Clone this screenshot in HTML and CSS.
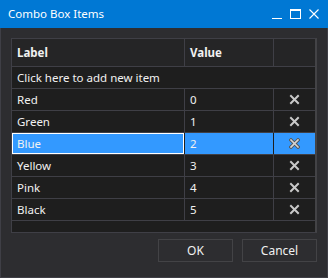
FILE: index.html
```html
<!DOCTYPE html>
<html lang="en">
<head>
  <meta charset="UTF-8" />
  <title>Combo Box Items</title>
  <link rel="stylesheet" href="styles.css">
</head>
<body>

  <div class="window">
    <!-- Title bar -->
    <div class="titlebar">
      <span class="title">Combo Box Items</span>
      <div class="controls">
        <svg width="10" height="10" viewBox="0 0 10 10"><path d="M0 9.5H10" stroke="#fff" stroke-width="1"/></svg>
        <svg width="11" height="10" viewBox="0 0 11 10"><rect x="0.5" y="0.5" width="10" height="9" fill="none" stroke="#fff" stroke-width="1"/><path d="M0 1.5H11" stroke="#fff" stroke-width="1"/></svg>
        <svg width="10" height="10" viewBox="0 0 10 10"><path d="M0.5 0.5L9.5 9.5M9.5 0.5L0.5 9.5" stroke="#fff" stroke-width="1.1"/></svg>
      </div>
    </div>

    <div class="content">
      <div class="grid">
        <div class="row header">
          <div class="cell label">Label</div>
          <div class="cell value">Value</div>
          <div class="cell del"></div>
        </div>
        <div class="row add-row">
          <div class="cell">Click here to add new item</div>
        </div>
        <div id="rows"></div>
        <div class="filler"></div>
      </div>

      <div class="buttons">
        <button>OK</button>
        <button>Cancel</button>
      </div>
    </div>
  </div>

<script>
  const items = ['Red', 'Green', 'Blue', 'Yellow', 'Pink', 'Black'];
  const selected = 2;
  const list = document.getElementById('rows');

  items.forEach((name, i) => {
    const row = document.createElement('div');
    row.className = 'row' + (i === selected ? ' selected' : '');
    row.innerHTML = `
      <div class="cell label">${name}</div>
      <div class="cell value">${i}</div>
      <div class="cell del">
        <svg width="11" height="11" viewBox="0 0 11 11">
          <path d="M2 2L9 9M9 2L2 9" stroke="${i === selected ? '#555' : '#c9c9c9'}" stroke-width="${i === selected ? 3.4 : 2}" stroke-linecap="square"/>
          ${i === selected ? '<path d="M2 2L9 9M9 2L2 9" stroke="#d6d6d6" stroke-width="1.6" stroke-linecap="square"/>' : ''}
        </svg>
      </div>
    `;
    list.appendChild(row);
  });
</script>

</body>
</html>
```

FILE: styles.css
```css
body {
  margin: 0;
  font-family: "Noto Sans", sans-serif;
  font-size: 11.5px;
  color: #f1f1f1;
  background: #2d2d30;
}

.window {
  width: 328px;
  height: 278px;
  box-sizing: border-box;
  background: #2d2d30;
  border: 1px solid #3f3f46;
  border-top: none;
  display: flex;
  flex-direction: column;
}

.titlebar {
  height: 28px;
  margin: 0 -1px;
  background: #0078d4;
  display: flex;
  align-items: center;
  justify-content: space-between;
  padding: 0 9px 0 8px;
  color: #fff;
}
.title {
  font-size: 11.5px;
  margin-top: -1px;
}
.controls {
  display: flex;
  gap: 8px;
  align-items: center;
}

.content {
  padding: 10px 10px 0 10px;
}

.grid {
  border: 1px solid #3f3f46;
  border-right: 2px solid #434346;
  background: #1e1e1e;
}
.row {
  display: flex;
  height: 21px;
  border-bottom: 1px solid #3f3f46;
}
.row.header {
  height: 27px;
  font-weight: bold;
  background: #252526;
}
.cell {
  display: flex;
  align-items: center;
  padding-left: 5px;
  box-sizing: border-box;
}
.cell.label {
  width: 173px;
  border-right: 1px solid #3f3f46;
}
.cell.value {
  width: 89px;
  border-right: 1px solid #3f3f46;
}
.cell.del {
  width: 41px;
  justify-content: center;
  padding-left: 0;
}
.row.selected .cell {
  background: #3399ff;
}
.row.selected .cell.label {
  border: 1px solid #fff;
  box-shadow: 1px 0 0 #1e1e1e;
  padding-left: 4px;
  width: 172px;
  margin-right: 1px;
}
.row.selected .cell.value {
  border-right-color: #1e1e1e;
}
.filler {
  height: 11px;
}

.buttons {
  display: flex;
  justify-content: flex-end;
  gap: 9px;
  margin-top: 6px;
}
button {
  width: 75px;
  height: 23px;
  background: #2d2d30;
  border: 1px solid #434346;
  color: #f1f1f1;
  font-family: "Noto Sans", sans-serif;
  font-size: 12px;
  padding: 0;
}
```
